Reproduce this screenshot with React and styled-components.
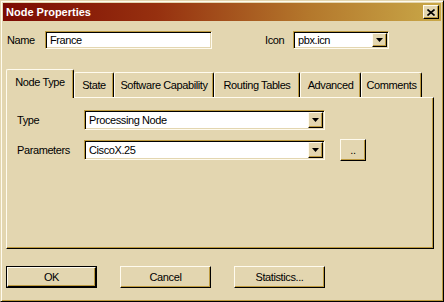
import React from 'react';
import styled, { createGlobalStyle, css } from 'styled-components';

const colors = {
  face: '#e3d6b0',
  light: '#fffbee',
  shadow: '#bd9a3e',
  dark: '#000000',
  white: '#ffffff',
};

const GlobalStyle = createGlobalStyle`
  html, body {
    margin: 0;
    padding: 0;
    background: ${colors.face};
  }
  body {
    font-family: "Liberation Sans", Arial, sans-serif;
    font-size: 11px;
    letter-spacing: -0.4px;
    color: #000;
  }
  * { box-sizing: border-box; }
`;

const raised = css`
  border: 1px solid;
  border-color: ${colors.light} ${colors.dark} ${colors.dark} ${colors.light};
  box-shadow: inset -1px -1px 0 ${colors.shadow};
`;

const sunken = css`
  border: 1px solid;
  border-color: ${colors.shadow} ${colors.light} ${colors.light} ${colors.shadow};
  box-shadow: inset 1px 1px 0 ${colors.dark}, inset -1px -1px 0 ${colors.face};
  padding: 1px;
`;

const Window = styled.div`
  width: 444px;
  height: 302px;
  background: ${colors.face};
  border: 1px solid;
  border-color: ${colors.face} ${colors.dark} ${colors.dark} ${colors.face};
  box-shadow: inset 1px 1px 0 ${colors.light}, inset -1px -1px 0 ${colors.shadow};
  padding: 2px;
  display: flex;
  flex-direction: column;
`;

const TitleBar = styled.div`
  height: 18px;
  display: flex;
  align-items: center;
  justify-content: space-between;
  padding: 0 2px 0 3px;
  background: linear-gradient(to right, #7c0a02 0%, #96300f 35%, #b4782c 70%, #c9a848 100%);
`;

const Title = styled.span`
  color: ${colors.white};
  font-weight: bold;
  font-size: 11px;
  letter-spacing: 0;
`;

const CloseButton = styled.div`
  width: 16px;
  height: 14px;
  background: ${colors.face};
  ${raised};
  display: flex;
  align-items: center;
  justify-content: center;
`;

const Content = styled.div`
  flex: 1;
  display: flex;
  flex-direction: column;
  padding-top: 10px;
`;

const TopRow = styled.div`
  display: flex;
  align-items: center;
  padding-left: 4px;
  height: 18px;
`;

const Label = styled.span`
  width: ${(p) => p.$w}px;
  margin-left: ${(p) => p.$ml || 0}px;
  flex: none;
  white-space: nowrap;
`;

const TextField = styled.div`
  ${sunken};
  width: ${(p) => p.$w}px;
  height: ${(p) => p.$h}px;
  background: ${colors.white};
  display: flex;
  align-items: center;
`;

const FieldText = styled.span`
  flex: 1;
  padding-left: 3px;
  background: ${colors.white};
  align-self: stretch;
  display: flex;
  align-items: center;
`;

const ArrowButton = styled.div`
  width: 15px;
  align-self: stretch;
  background: ${colors.face};
  ${raised};
  display: flex;
  align-items: center;
  justify-content: center;
`;

const Arrow = () => (
  <svg width="7" height="4" viewBox="0 0 7 4">
    <path d="M0 0h7L3.5 4z" fill="#000" />
  </svg>
);

const Combo = ({ value, w, h }) => (
  <TextField $w={w} $h={h}>
    <FieldText>{value}</FieldText>
    <ArrowButton>
      <Arrow />
    </ArrowButton>
  </TextField>
);

const TabStrip = styled.div`
  display: flex;
  align-items: flex-end;
  height: 28px;
  margin: 20px 0 0 3px;
`;

const Tab = styled.div`
  position: relative;
  width: ${(p) => p.$w}px;
  height: ${(p) => (p.$active ? 29 : 25)}px;
  margin-bottom: ${(p) => (p.$active ? -1 : 0)}px;
  z-index: ${(p) => (p.$active ? 2 : 1)};
  background: ${colors.face};
  border-top: 1px solid ${colors.light};
  border-left: 1px solid ${colors.light};
  border-right: 1px solid ${colors.dark};
  border-top-left-radius: 2px;
  border-top-right-radius: 2px;
  box-shadow: inset -1px 0 0 ${colors.shadow};
  display: flex;
  align-items: center;
  justify-content: center;
  padding-bottom: ${(p) => (p.$active ? 4 : 1)}px;
  white-space: nowrap;
`;

const Panel = styled.div`
  width: 428px;
  height: 152px;
  margin-left: 3px;
  background: ${colors.face};
  ${raised};
  padding: 12px 10px;
  display: flex;
  flex-direction: column;
  gap: 10px;
`;

const FormRow = styled.div`
  display: flex;
  align-items: center;
  height: 20px;
`;

const Button = styled.div`
  width: ${(p) => p.$w}px;
  height: ${(p) => p.$h}px;
  margin-left: ${(p) => p.$ml || 0}px;
  background: ${colors.face};
  ${raised};
  display: flex;
  align-items: center;
  justify-content: center;
`;

const DefaultButton = styled.div`
  width: 91px;
  height: 22px;
  border: 1px solid ${colors.dark};
  display: flex;
`;

const DefaultInner = styled.div`
  flex: 1;
  background: ${colors.face};
  ${raised};
  display: flex;
  align-items: center;
  justify-content: center;
`;

const ButtonRow = styled.div`
  display: flex;
  margin: 17px 0 0 3px;
  gap: 23px;
`;

const tabs = [
  { label: 'Node Type', w: 68, active: true },
  { label: 'State', w: 40 },
  { label: 'Software Capability', w: 100 },
  { label: 'Routing Tables', w: 86 },
  { label: 'Advanced', w: 61 },
  { label: 'Comments', w: 61 },
];

export default function App() {
  return (
    <>
      <GlobalStyle />
      <Window>
        <TitleBar>
          <Title>Node Properties</Title>
          <CloseButton>
            <svg width="8" height="7" viewBox="0 0 8 7">
              <path d="M0.5 0.5L7.5 6.5M7.5 0.5L0.5 6.5" stroke="#000" strokeWidth="1.6" />
            </svg>
          </CloseButton>
        </TitleBar>
        <Content>
          <TopRow>
            <Label $w={38}>Name</Label>
            <TextField $w={167} $h={18}>
              <FieldText>France</FieldText>
            </TextField>
            <Label $w={28} $ml={53}>Icon</Label>
            <Combo value="pbx.icn" w={96} h={18} />
          </TopRow>
          <TabStrip>
            {tabs.map((t) => (
              <Tab key={t.label} $w={t.w} $active={t.active}>
                {t.label}
              </Tab>
            ))}
          </TabStrip>
          <Panel>
            <FormRow>
              <Label $w={67}>Type</Label>
              <Combo value="Processing Node" w={241} h={20} />
            </FormRow>
            <FormRow>
              <Label $w={67}>Parameters</Label>
              <Combo value="CiscoX.25" w={241} h={20} />
              <Button $w={26} $h={22} $ml={15}>..</Button>
            </FormRow>
          </Panel>
          <ButtonRow>
            <DefaultButton>
              <DefaultInner>OK</DefaultInner>
            </DefaultButton>
            <Button $w={91} $h={22}>Cancel</Button>
            <Button $w={91} $h={22}>Statistics...</Button>
          </ButtonRow>
        </Content>
      </Window>
    </>
  );
}
